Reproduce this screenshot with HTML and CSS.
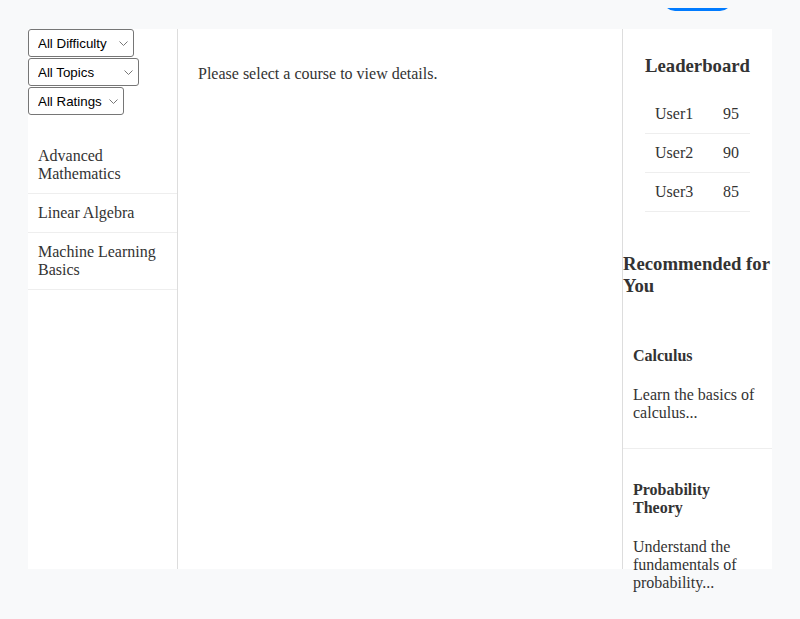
FILE: index.html
```html
<!DOCTYPE html>
<html lang="en">
<head>
<meta charset="utf-8">
<title>Courses</title>
<link rel="stylesheet" href="styles.css">
</head>
<body>
<header class="top-bar">
  <button class="profile-btn">Profile</button>
</header>
<div class="layout">
  <aside class="sidebar-left">
    <div class="filters">
      <select class="filter filter-difficulty">
        <option>All Difficulty</option>
        <option>Beginner</option>
        <option>Intermediate</option>
        <option>Advanced</option>
      </select>
      <select class="filter filter-topics">
        <option>All Topics</option>
        <option>Mathematics</option>
        <option>Computer Science</option>
      </select>
      <select class="filter filter-ratings">
        <option>All Ratings</option>
        <option>4+ Stars</option>
        <option>3+ Stars</option>
      </select>
    </div>
    <ul class="course-list">
      <li class="course-item">Advanced Mathematics</li>
      <li class="course-item">Linear Algebra</li>
      <li class="course-item">Machine Learning Basics</li>
    </ul>
  </aside>
  <main class="content">
    <p>Please select a course to view details.</p>
  </main>
  <aside class="sidebar-right">
    <section class="leaderboard">
      <h3>Leaderboard</h3>
      <table class="board">
        <tr><td class="user">User1</td><td>95</td></tr>
        <tr><td class="user">User2</td><td>90</td></tr>
        <tr><td class="user">User3</td><td>85</td></tr>
      </table>
    </section>
    <section class="recommended">
      <h3>Recommended for You</h3>
      <div class="rec-card">
        <h4>Calculus</h4>
        <p>Learn the basics of calculus...</p>
      </div>
      <div class="rec-card">
        <h4>Probability Theory</h4>
        <p>Understand the fundamentals of probability...</p>
      </div>
    </section>
  </aside>
</div>
</body>
</html>
```

FILE: styles.css
```css
html {
  background: #f8f9fa;
}
body {
  margin: 8px;
  min-height: calc(100vh - 16px);
  font-family: "Liberation Serif", "Times New Roman", serif;
  color: #333;
  font-size: 16px;
}
.top-bar {
  height: 21px;
  display: flex;
  justify-content: flex-end;
  align-items: flex-start;
}
.profile-btn {
  margin-top: -25px;
  margin-right: 60px;
  width: 69px;
  height: 28px;
  padding: 0;
  border: none;
  border-radius: 12px;
  background: #007bff;
  color: #fff;
  font-family: "Liberation Sans", Arial, sans-serif;
  font-size: 16px;
}
.layout {
  margin: 0 20px;
  height: 540px;
  background: #fff;
  display: grid;
  grid-template-columns: 150px 1fr 150px;
  grid-template-rows: minmax(0, 1fr);
}
.sidebar-left {
  border-right: 1px solid #ddd;
}
.filters {
  display: flex;
  flex-direction: column;
  align-items: flex-start;
  gap: 1px;
  margin-bottom: 22px;
}
.filter {
  appearance: none;
  -webkit-appearance: none;
  box-sizing: border-box;
  height: 28px;
  margin: 0;
  padding: 0 18px 0 9px;
  font-family: "Liberation Sans", Arial, sans-serif;
  font-size: 13.33px;
  color: #000;
  background: #fff url("data:image/svg+xml,%3Csvg xmlns='http://www.w3.org/2000/svg' width='9' height='5' viewBox='0 0 9 5'%3E%3Cpath d='M0.5 0.5l4 4 4-4' fill='none' stroke='%23777' stroke-width='1'/%3E%3C/svg%3E") no-repeat right 5px center;
  border: 1px solid #767676;
  border-radius: 3px;
}
.filter-difficulty { width: 106px; }
.filter-topics { width: 111px; }
.filter-ratings { width: 96px; }
.course-list {
  list-style: none;
  margin: 0;
  padding: 0;
}
.course-item {
  padding: 10px;
  border-bottom: 1px solid #eee;
}
.content {
  padding: 20px;
}
.content p {
  margin: 16px 0;
}
.sidebar-right {
  border-left: 1px solid #ddd;
}
.leaderboard {
  padding: 7px 22px 22px;
}
.leaderboard h3 {
  margin: 18.72px 0;
}
.board {
  width: 100%;
  border-collapse: collapse;
}
.board td {
  padding: 10px;
  border-bottom: 1px solid #eee;
}
.board .user {
  width: 48px;
}
.recommended h3 {
  margin: 18.72px 0;
}
.rec-card {
  padding: 10px;
  border-bottom: 1px solid #eee;
}
```
